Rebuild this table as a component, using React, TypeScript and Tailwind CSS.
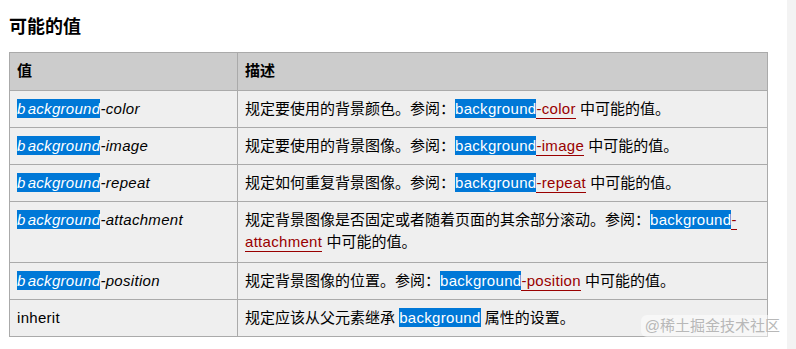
const font = '"Liberation Sans", "Noto Sans CJK SC", Arial, sans-serif';

function Sel({ children }: { children: React.ReactNode }) {
  return <span className="bg-[#0078d7] text-white py-[1px] tracking-[0.3px]">{children}</span>;
}

function Link({ children }: { children: React.ReactNode }) {
  return <span className="text-[#990000] border-b border-[#990000] tracking-[0.3px] pb-[1px]">{children}</span>;
}

function Prop({ suffix }: { suffix: string }) {
  return (
    <span className="italic tracking-[0.3px]">
      <Sel>
        b<span className="ml-[2px]">ackground</span>
      </Sel>
      {suffix}
    </span>
  );
}

function SeeAlso({ suffix }: { suffix: string }) {
  return (
    <>
      参阅：
      <Sel>background</Sel>
      <Link>{suffix}</Link> 中可能的值。
    </>
  );
}

const rows = [
  { name: <Prop suffix="-color" />, desc: <>规定要使用的背景颜色。<SeeAlso suffix="-color" /></> },
  { name: <Prop suffix="-image" />, desc: <>规定要使用的背景图像。<SeeAlso suffix="-image" /></> },
  { name: <Prop suffix="-repeat" />, desc: <>规定如何重复背景图像。<SeeAlso suffix="-repeat" /></> },
  {
    name: <Prop suffix="-attachment" />,
    desc: (
      <>
        规定背景图像是否固定或者随着页面的其余部分滚动。参阅：
        <Sel>background</Sel>
        <Link>-</Link>
        <br />
        <Link>attachment</Link> 中可能的值。
      </>
    ),
    tall: true,
  },
  { name: <Prop suffix="-position" />, desc: <>规定背景图像的位置。<SeeAlso suffix="-position" /></> },
  {
    name: <span className="tracking-[0.3px]">inherit</span>,
    desc: (
      <>
        规定应该从父元素继承 <Sel>background</Sel> 属性的设置。
      </>
    ),
  },
];

export default function App() {
  return (
    <div className="relative flex w-[796px] h-[349px] bg-white text-black overflow-hidden" style={{ fontFamily: font }}>
      <div className="w-[787px] pl-[9px] pt-[15px]">
        <h3 className="text-[18px] leading-[24px] font-bold mb-[13px]">可能的值</h3>
        <table className="w-[759px] border-collapse text-[15px] leading-[22px]">
          <thead>
            <tr>
              <th className="w-[228px] bg-[#cccccc] border border-[#aaaaaa] text-left font-bold align-top pl-[7px] pr-[15px] py-[7px] h-[38px]">值</th>
              <th className="bg-[#cccccc] border border-[#aaaaaa] text-left font-bold align-top pl-[7px] pr-[15px] py-[7px]">描述</th>
            </tr>
          </thead>
          <tbody>
            {rows.map((r, i) => (
              <tr key={i}>
                <td className={`bg-[#efefef] border border-[#aaaaaa] align-top pl-[7px] pr-[15px] pt-[7px] ${r.tall ? 'pb-[9px]' : 'pb-[7px]'}`}>
                  {r.name}
                </td>
                <td className={`bg-[#efefef] border border-[#aaaaaa] align-top pl-[7px] pr-[15px] pt-[7px] ${r.tall ? 'pb-[9px]' : 'pb-[7px]'}`}>
                  {r.desc}
                </td>
              </tr>
            ))}
          </tbody>
        </table>
      </div>
      <div className="flex-1 bg-[#f3f3f3]" />
      <div className="absolute right-[12px] bottom-[12px] px-[4px] rounded-[6px] bg-white/50 text-[15px] leading-[22px] text-[#b8b8b8]">
        @稀土掘金技术社区
      </div>
    </div>
  );
}
